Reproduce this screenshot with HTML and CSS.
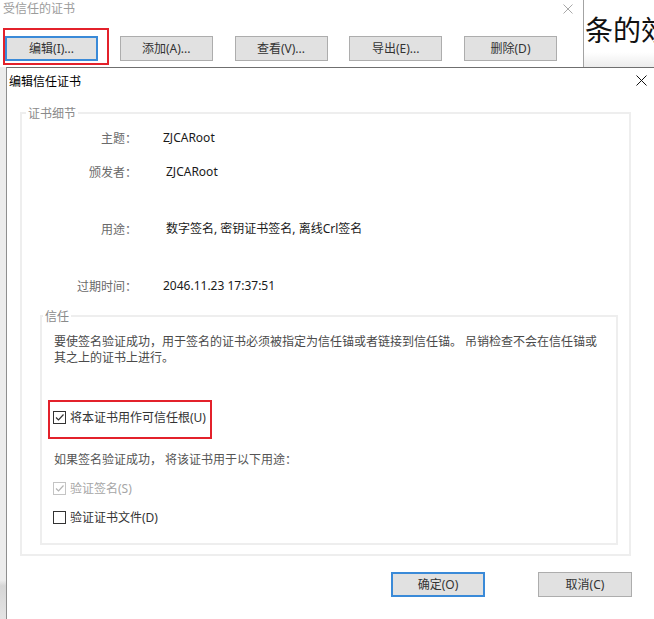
FILE: index.html
```html
<!DOCTYPE html>
<html lang="zh-CN">
<head>
    <meta charset="UTF-8">
    <meta name="viewport" content="width=device-width, initial-scale=1.0">
    <title>编辑信任证书</title>
    <link rel="stylesheet" href="styles.css">
</head>
<body>
    <!-- Окно на заднем плане: список доверенных сертификатов -->
    <div class="top">
        <div class="bg-window">
            <div class="bg-title">
                <span>受信任的证书</span>
                <svg class="close close-dim" width="10" height="10" viewBox="0 0 10 10">
                    <path d="M0.5 0.5 L9.5 9.5 M9.5 0.5 L0.5 9.5"/>
                </svg>
            </div>
            <div class="bg-buttons">
                <button class="btn btn-focus marked">编辑(I)...</button>
                <button class="btn">添加(A)...</button>
                <button class="btn">查看(V)...</button>
                <button class="btn">导出(E)...</button>
                <button class="btn">删除(D)</button>
            </div>
        </div>
        <div class="bg-doc">条的效</div>
    </div>

    <!-- Диалог редактирования -->
    <div class="lower">
        <div class="edge"></div>
        <div class="dialog">
            <div class="dialog-title">
                <span>编辑信任证书</span>
                <svg class="close" width="11" height="11" viewBox="0 0 11 11">
                    <path d="M0.5 0.5 L10.5 10.5 M10.5 0.5 L0.5 10.5"/>
                </svg>
            </div>

            <div class="dialog-body">
                <fieldset class="group">
                    <legend>证书细节</legend>
                    <div class="details">
                        <div class="field">
                            <span class="label">主题：</span>
                            <span class="value">ZJCARoot</span>
                        </div>
                        <div class="field field-wide">
                            <span class="label">颁发者：</span>
                            <span class="value shift">ZJCARoot</span>
                        </div>
                        <div class="field field-wide">
                            <span class="label">用途：</span>
                            <span class="value shift">数字签名, 密钥证书签名, 离线Crl签名</span>
                        </div>
                        <div class="field field-last">
                            <span class="label">过期时间：</span>
                            <span class="value">2046.11.23 17:37:51</span>
                        </div>

                        <fieldset class="group group-trust">
                            <legend>信任</legend>
                            <div class="trust-body">
                                <p class="note">要使签名验证成功，用于签名的证书必须被指定为信任锚或者链接到信任锚。 吊销检查不会在信任锚或<br>其之上的证书上进行。</p>

                                <label class="check check-root marked-row">
                                    <span class="box">
                                        <svg width="11" height="11" viewBox="0 0 11 11"><path d="M2 5.5 L4.5 8 L9.5 2.5"/></svg>
                                    </span>
                                    将本证书用作可信任根(U)
                                </label>

                                <p class="hint">如果签名验证成功， 将该证书用于以下用途：</p>

                                <label class="check check-sign disabled">
                                    <span class="box">
                                        <svg width="11" height="11" viewBox="0 0 11 11"><path d="M2 5.5 L4.5 8 L9.5 2.5"/></svg>
                                    </span>
                                    验证签名(S)
                                </label>

                                <label class="check check-file">
                                    <span class="box"></span>
                                    验证证书文件(D)
                                </label>
                            </div>
                        </fieldset>
                    </div>
                </fieldset>

                <div class="actions">
                    <button class="btn btn-focus">确定(O)</button>
                    <button class="btn">取消(C)</button>
                </div>
            </div>
        </div>
    </div>
</body>
</html>
```

FILE: styles.css
```css
body {
    margin: 0;
    width: 654px;
    height: 619px;
    overflow: hidden;
    background: #fff;
    font-family: "Noto Sans", "Noto Sans CJK SC", sans-serif;
    font-size: 12px;
    color: #222;
}
/* Верхняя полоса: старое окно + документ справа */
.top {
    display: flex;
    height: 67px;
}
.bg-window {
    width: 584px;
    box-sizing: border-box;
    border-right: 1px solid #a3a3a3;
    background: #fff;
}
.bg-title {
    height: 18px;
    display: flex;
    align-items: center;
    justify-content: space-between;
    padding: 0 10px 0 3px;
    color: #9c9c9c;
    line-height: 18px;
}
.bg-buttons {
    display: flex;
    gap: 21.75px;
    margin-top: 18px;
    padding-left: 5px;
}
.bg-doc {
    flex: 1;
    padding: 11px 0 0 1px;
    font-family: "Noto Sans CJK SC", sans-serif;
    font-size: 28px;
    line-height: 36px;
    color: #111;
    white-space: nowrap;
    overflow: hidden;
    background: linear-gradient(to bottom, #fff 78%, #ececec 100%);
}
.close {
    fill: none;
    stroke: #111;
    stroke-width: 1;
}
.close-dim {
    stroke: #a8a8a8;
}
/* Кнопки в стиле Windows */
.btn {
    width: 93px;
    height: 25px;
    box-sizing: border-box;
    padding: 0;
    border: 1px solid #adadad;
    background: #e1e1e1;
    font-family: "Noto Sans", "Noto Sans CJK SC", sans-serif;
    font-size: 12px;
    color: #333;
    line-height: 21px;
}
.btn-focus {
    border: 2px solid #3a8ad8;
}
/* Красные рамки-пометки поверх элементов */
.marked {
    position: relative;
}
.marked::after {
    content: '';
    position: absolute;
    left: -4px;
    top: -10px;
    right: -13px;
    bottom: -6px;
    border: 2px solid #e3212b;
}
.marked-row {
    position: relative;
}
.marked-row::after {
    content: '';
    position: absolute;
    left: -6px;
    top: -9px;
    right: -6px;
    bottom: -14px;
    border: 2px solid #e3212b;
}
/* Нижняя часть: диалог */
.lower {
    display: flex;
    height: 552px;
}
.edge {
    width: 6px;
    background: linear-gradient(to bottom, #ececec 93%, #d6d6d6 94%, #e4e4e4 100%);
}
.dialog {
    flex: 1;
    border-left: 1px solid #8e8e8e;
    border-top: 1px solid #6f6f6f;
    background: #fff;
}
.dialog-title {
    height: 24px;
    display: flex;
    align-items: center;
    justify-content: space-between;
    padding: 0 7px 0 2px;
    color: #000;
    font-family: "Noto Sans CJK SC", sans-serif;
}
.dialog-body {
    padding: 14px 23px 0 13px;
}
.group {
    margin: 0;
    padding: 0;
    min-width: 0;
    border: 2px solid #eeeeee;
}
.group legend {
    margin-left: 4px;
    padding: 0 2px;
    font-family: "Noto Sans CJK SC", sans-serif;
    line-height: 14px;
    color: #8a8a8a;
}
.details {
    padding: 10px 11px 9px 18px;
}
.field {
    display: flex;
    height: 16px;
    line-height: 16px;
    margin-bottom: 18px;
}
.field-wide {
    margin-bottom: 41px;
}
.field-last {
    margin-bottom: 15px;
}
.label {
    width: 97px;
    text-align: right;
    color: #6a6a6a;
    font-family: "Noto Sans CJK SC", sans-serif;
}
.value {
    margin-left: 26px;
    color: #1a1a1a;
}
.value.shift {
    margin-left: 29px;
}
.group-trust legend {
    margin-left: 1px;
}
.trust-body {
    padding: 11px 12px 18px 12px;
}
.note {
    margin: 0;
    line-height: 16px;
    color: #4a4a4a;
    white-space: nowrap;
}
.hint {
    margin: 27px 0 0;
    line-height: 16px;
    color: #555;
}
.check {
    display: flex;
    align-items: center;
    gap: 4px;
    width: fit-content;
    height: 16px;
    color: #333;
}
.check-root {
    margin-top: 43px;
}
.check-sign {
    margin-top: 12px;
}
.check-file {
    margin-top: 13px;
}
.box {
    width: 13px;
    height: 13px;
    box-sizing: border-box;
    margin-left: -1px;
    border: 1px solid #333;
    background: #fff;
    display: flex;
    align-items: center;
    justify-content: center;
}
.box svg {
    fill: none;
    stroke: #333;
    stroke-width: 1.2;
}
.disabled {
    color: #a6a6a6;
}
.disabled .box {
    border-color: #c4c4c4;
}
.disabled .box svg {
    stroke: #b4b4b4;
}
.actions {
    display: flex;
    justify-content: flex-end;
    gap: 53px;
    margin: 16px -1px 0 0;
}
.actions .btn {
    width: 94px;
}
```
